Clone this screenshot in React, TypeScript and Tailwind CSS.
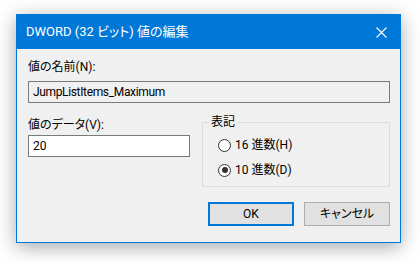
import React from "react";

const font = { fontFamily: 'Roboto, "Noto Sans CJK JP", sans-serif' };

function Radio({ checked, label }: { checked?: boolean; label: string }) {
  return (
    <div className="flex items-center h-[16px]">
      <div className="w-[13px] h-[13px] rounded-full border border-[#333333] bg-white flex items-center justify-center">
        {checked && <div className="w-[6px] h-[6px] rounded-full bg-[#333333]" />}
      </div>
      <span className="ml-[4px] text-[12px] leading-[16px] text-black">{label}</span>
    </div>
  );
}

export default function App() {
  return (
    <div className="w-[420px] h-[262px] bg-white pt-[14px] pl-[16px] [font-feature-settings:'palt']" style={font}>
      <div className="w-[385px] h-[229px] border border-[#0078d7] bg-[#f0f0f0] shadow-[0_4px_18px_rgba(0,0,0,0.35)] flex flex-col">
        <div className="h-[34px] bg-[#0078d7] flex items-center pl-[9px] pr-[13px]">
          <span className="text-white text-[13px] leading-[18px] flex-1">DWORD (32 ビット) 値の編集</span>
          <svg width="11" height="11" viewBox="0 0 11 11" className="mt-[1px]">
            <path d="M0.5 0.5 L10.5 10.5 M10.5 0.5 L0.5 10.5" stroke="white" strokeWidth="1.1" />
          </svg>
        </div>
        <div className="flex flex-col pl-[11px] pr-[10px] pt-[10px]">
          <div className="text-[12px] leading-[16px] text-black">値の名前(N):</div>
          <div className="mt-[6px] h-[22px] border border-[#7a7a7a] bg-[#f0f0f0] flex items-center pl-[4px] text-[12px] text-black tracking-[-0.35px]">
            JumpListItems_Maximum
          </div>
          <div className="flex mt-[14px]">
            <div className="w-[162px] flex flex-col">
              <div className="text-[12px] leading-[16px] text-black">値のデータ(V):</div>
              <div className="mt-[2px] h-[22px] border border-[#7a7a7a] bg-white flex items-center pl-[4px] text-[12px] text-black">
                20
              </div>
            </div>
            <div className="relative ml-[12px] mt-[5px] w-[188px] h-[65px] border border-[#dcdcdc] pl-[15px] flex flex-col">
              <span className="absolute left-[6px] top-[-9px] px-[2px] bg-[#f0f0f0] text-[12px] leading-[16px] text-black">表記</span>
              <div className="mt-[14px] flex flex-col gap-[9px]">
                <Radio label="16 進数(H)" />
                <Radio checked label="10 進数(D)" />
              </div>
            </div>
          </div>
          <div className="flex justify-end gap-[10px] mt-[15px]">
            <div className="w-[86px] h-[24px] border-2 border-[#0078d7] bg-[#e1e1e1] flex items-center justify-center text-[12px] text-black">
              OK
            </div>
            <div className="w-[86px] h-[24px] border border-[#adadad] bg-[#e1e1e1] flex items-center justify-center text-[12px] text-black">
              キャンセル
            </div>
          </div>
        </div>
      </div>
    </div>
  );
}
